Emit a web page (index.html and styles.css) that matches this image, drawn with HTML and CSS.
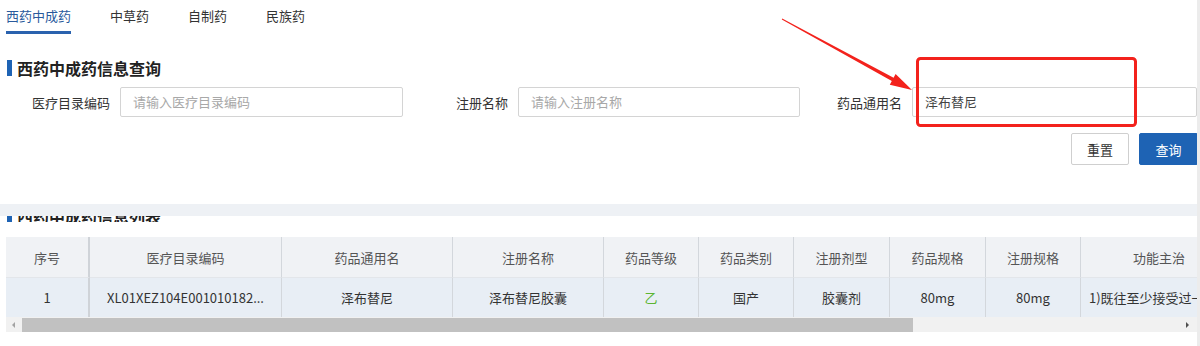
FILE: index.html
```html
<!DOCTYPE html>
<html lang="zh-CN">
<head>
<meta charset="utf-8">
<title>西药中成药信息查询</title>
<link rel="stylesheet" href="styles.css">
</head>
<body>
<div class="page">
  <nav class="tabs">
    <span class="tab active">西药中成药</span>
    <span class="tab">中草药</span>
    <span class="tab">自制药</span>
    <span class="tab">民族药</span>
  </nav>

  <h2 class="section-title">西药中成药信息查询</h2>

  <div class="form-row">
    <div class="field f1"><label>医疗目录编码</label><div class="input placeholder">请输入医疗目录编码</div></div>
    <div class="field f2"><label>注册名称</label><div class="input placeholder">请输入注册名称</div></div>
    <div class="field f3"><label>药品通用名</label><div class="input value">泽布替尼</div></div>
  </div>

  <div class="actions">
    <button class="btn">重置</button>
    <button class="btn primary">查询</button>
  </div>

  <div class="band"></div>
  <div class="clip-title"><h2 class="section-title list">西药中成药信息列表</h2></div>

  <div class="table-wrap">
    <div class="table">
      <div class="tr head">
        <div class="td c1">序号</div>
        <div class="td c2">医疗目录编码</div>
        <div class="td c3">药品通用名</div>
        <div class="td c4">注册名称</div>
        <div class="td c5">药品等级</div>
        <div class="td c6">药品类别</div>
        <div class="td c7">注册剂型</div>
        <div class="td c8">药品规格</div>
        <div class="td c9">注册规格</div>
        <div class="td c10">功能主治</div>
      </div>
      <div class="tr body">
        <div class="td c1">1</div>
        <div class="td c2">XL01XEZ104E001010182...</div>
        <div class="td c3">泽布替尼</div>
        <div class="td c4">泽布替尼胶囊</div>
        <div class="td c5 green">乙</div>
        <div class="td c6">国产</div>
        <div class="td c7">胶囊剂</div>
        <div class="td c8">80mg</div>
        <div class="td c9">80mg</div>
        <div class="td c10 left">1)既往至少接受过一种治疗</div>
      </div>
    </div>
    <div class="hscroll">
      <span class="arrow l"></span>
      <div class="thumb"></div>
      <span class="arrow r"></span>
    </div>
  </div>

  <svg class="annot" width="1200" height="346" viewBox="0 0 1200 346">
    <polygon fill="#f3221c" points="782.2,18.6 893.6,77.8 895.6,74.1 912,90 889.8,84.7 891.8,81 781.8,19.4"/>
    <rect x="917.5" y="58.5" width="218" height="67" rx="3" fill="none" stroke="#f3221c" stroke-width="3"/>
  </svg>
</div>
</body>
</html>
```

FILE: styles.css
```css
* { box-sizing: border-box; }
html, body { margin: 0; padding: 0; background: #fff; }
body {
  font-family: "Noto Sans CJK SC", "Noto Sans", "Liberation Sans", sans-serif;
  font-size: 13px;
  color: #333;
}
.page {
  position: relative;
  width: 1200px;
  height: 346px;
  overflow: hidden;
  border-right: 3px solid #ececec;
}
.tabs {
  display: flex;
  gap: 39px;
  padding-left: 6px;
  height: 34px;
}
.tab {
  height: 34px;
  font-size: 13px;
  color: #333;
  border-bottom: 3px solid transparent;
  line-height: 31px;
}
.tab.active {
  color: #2a5a9c;
  border-bottom-color: #2a62ae;
}
.section-title {
  margin: 24px 0 0 7px;
  height: 20px;
  display: flex;
  align-items: center;
  font-size: 16px;
  line-height: 20px;
  font-weight: bold;
  color: #222;
}
.section-title::before {
  content: "";
  width: 5px;
  height: 16px;
  background: #1e63b4;
  margin-right: 5px;
}
.form-row {
  display: flex;
  margin-top: 9px;
  height: 30px;
}
.field { display: flex; align-items: center; }
.field label {
  text-align: right;
  margin-right: 10px;
  font-size: 13px;
  color: #333;
}
.f1 label { width: 110px; }
.f1 .input { width: 283px; }
.f2 label { width: 105px; }
.f2 .input { width: 282px; }
.f3 label { width: 102px; }
.f3 .input { width: 285px; }
.input {
  height: 30px;
  border: 1px solid #d4d4d4;
  border-radius: 2px;
  padding-left: 12px;
  line-height: 28px;
  font-size: 13px;
}
.placeholder { color: #a8a8a8; }
.value { color: #444; }
.actions {
  display: flex;
  justify-content: flex-end;
  gap: 10px;
  width: 1198px;
  margin-top: 16px;
  height: 32px;
}
.btn {
  font-family: inherit;
  font-size: 13px;
  width: 58px;
  height: 32px;
  border: 1px solid #cfcfcf;
  background: #fff;
  color: #333;
  border-radius: 2px;
  padding: 0;
}
.btn.primary {
  width: 59px;
  background: #1e63b4;
  border-color: #1e63b4;
  color: #fff;
}
.band {
  margin-top: 39px;
  height: 12px;
  width: 1197px;
  background: #eef1f5;
}
.clip-title {
  height: 6px;
  overflow: hidden;
  display: flex;
  align-items: flex-end;
}
.clip-title .section-title {
  margin-top: 0;
  flex: none;
  height: 20px;
  margin-bottom: -4px;
}
.table-wrap {
  margin: 15px 0 0 6px;
  width: 1191px;
  overflow: hidden;
}
.table { width: 1240px; }
.tr { display: flex; }
.tr.head { height: 41px; background: #f0f2f5; color: #555; }
.tr.body { height: 39px; background: #e8eef5; color: #333; }
.td {
  flex: none;
  display: flex;
  align-items: center;
  justify-content: center;
  border-right: 1px solid #d3d7dc;
  font-size: 13px;
  white-space: nowrap;
  overflow: hidden;
}
.head .td { border-bottom: 1px solid #e3e6ea; }
.c1 { width: 84px; border-right: 2px solid #cfd3d8; }
.c2 { width: 192px; }
.c3 { width: 171px; }
.c4 { width: 151px; }
.c5 { width: 95px; }
.c6 { width: 95px; }
.c7 { width: 96px; }
.c8 { width: 96px; }
.c9 { width: 95px; }
.c10 { width: 156px; border-right: none; }
.c10.left { justify-content: flex-start; padding-left: 8px; }
.green { color: #5cb531; }
.hscroll {
  position: relative;
  height: 15px;
  background: #f1f1f1;
  display: flex;
  align-items: center;
}
.thumb {
  margin-left: 16px;
  width: 891px;
  height: 14px;
  background: #c1c1c1;
}
.arrow {
  position: absolute;
  top: 5px;
  width: 0;
  height: 0;
  border-top: 3px solid transparent;
  border-bottom: 3px solid transparent;
}
.arrow.l { left: 6px; border-right: 3px solid #a3a3a3; }
.arrow.r { right: 8px; border-left: 3px solid #505050; }
.annot {
  position: absolute;
  left: 0;
  top: 0;
  pointer-events: none;
}
```
